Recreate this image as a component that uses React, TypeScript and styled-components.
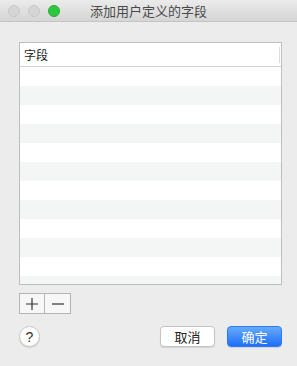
import styled, { createGlobalStyle } from 'styled-components';

const rows = Array.from({ length: 12 }, (_, i) => i);

export default function App() {
  return (
    <>
      <GlobalStyle />
      <Window>
        <TitleBar>
          <Lights>
            <Light />
            <Light />
            <Light $green />
          </Lights>
          <Title>添加用户定义的字段</Title>
        </TitleBar>
        <Content>
          <Table>
            <Header>
              <span>字段</span>
              <HeaderEdge />
            </Header>
            <Body>
              {rows.map((i) => (
                <Row key={i} $odd={i % 2 === 1} />
              ))}
            </Body>
          </Table>
          <Segments>
            <Segment>
              <svg width="14" height="14" viewBox="0 0 14 14">
                <path d="M7 1v12M1 7h12" stroke="#333" strokeWidth="1.2" />
              </svg>
            </Segment>
            <Segment>
              <svg width="14" height="14" viewBox="0 0 14 14">
                <path d="M1 7h12" stroke="#333" strokeWidth="1.2" />
              </svg>
            </Segment>
          </Segments>
          <Footer>
            <Help>?</Help>
            <Actions>
              <Button>取消</Button>
              <Button $primary>确定</Button>
            </Actions>
          </Footer>
        </Content>
      </Window>
    </>
  );
}

const GlobalStyle = createGlobalStyle`
  html, body {
    margin: 0;
    padding: 0;
    background: #ececec;
  }
  body {
    font-family: "Noto Sans CJK SC", "Noto Sans", sans-serif;
  }
`;

const Window = styled.div`
  width: 297px;
  height: 366px;
  background: #ececec;
  display: flex;
  flex-direction: column;
  overflow: hidden;
`;

const TitleBar = styled.div`
  box-sizing: border-box;
  height: 22px;
  border-bottom: 1px solid #c4c4c4;
  background: linear-gradient(#ebebeb, #d5d5d5);
  display: flex;
  align-items: center;
  position: relative;
`;

const Lights = styled.div`
  display: flex;
  gap: 8px;
  padding-left: 8px;
`;

const Light = styled.div<{ $green?: boolean }>`
  box-sizing: border-box;
  width: 12px;
  height: 12px;
  border-radius: 50%;
  background: ${(p) => (p.$green ? '#2dc83f' : '#d6d6d6')};
  border: 1px solid ${(p) => (p.$green ? '#25ad36' : '#c7c7c7')};
`;

const Title = styled.div`
  position: absolute;
  left: 0;
  right: 0;
  top: 0;
  line-height: 21px;
  text-align: center;
  font-size: 13px;
  color: #4a4a4a;
  pointer-events: none;
`;

const Content = styled.div`
  display: flex;
  flex-direction: column;
  padding: 20px 15px 0 19px;
`;

const Table = styled.div`
  box-sizing: border-box;
  width: 263px;
  height: 243px;
  border: 1px solid #bebebe;
  background: #fff;
  display: flex;
  flex-direction: column;
`;

const Header = styled.div`
  box-sizing: border-box;
  height: 24px;
  border-bottom: 1px solid #d2d2d2;
  display: flex;
  align-items: center;
  justify-content: space-between;
  padding-left: 4px;
  font-size: 12px;
  color: #222;
`;

const HeaderEdge = styled.div`
  width: 1px;
  height: 16px;
  background: #dcdcdc;
  margin-right: 1px;
`;

const Body = styled.div`
  flex: 1;
  overflow: hidden;
`;

const Row = styled.div<{ $odd: boolean }>`
  height: 19px;
  background: ${(p) => (p.$odd ? '#f4f5f5' : '#ffffff')};
`;

const Segments = styled.div`
  display: flex;
  margin-top: 8px;
`;

const Segment = styled.div`
  box-sizing: border-box;
  width: 26px;
  height: 21px;
  border: 1px solid #b5b5b5;
  background: #f7f7f7;
  display: flex;
  align-items: center;
  justify-content: center;
  & + & {
    border-left: none;
  }
`;

const Footer = styled.div`
  display: flex;
  align-items: center;
  justify-content: space-between;
  margin-top: 12px;
`;

const Help = styled.div`
  box-sizing: border-box;
  width: 21px;
  height: 21px;
  border-radius: 50%;
  background: #fff;
  border: 1px solid #c8c8c8;
  box-shadow: 0 1px 1px rgba(0, 0, 0, 0.12);
  display: flex;
  align-items: center;
  justify-content: center;
  font-family: "Liberation Sans", sans-serif;
  font-size: 14px;
  color: #333;
`;

const Actions = styled.div`
  display: flex;
  gap: 12px;
`;

const Button = styled.div<{ $primary?: boolean }>`
  box-sizing: border-box;
  width: 55px;
  height: 21px;
  border-radius: 4px;
  display: flex;
  align-items: center;
  justify-content: center;
  font-size: 13px;
  color: ${(p) => (p.$primary ? '#fff' : '#222')};
  background: ${(p) =>
    p.$primary ? 'linear-gradient(#69aafc, #1c6ff9)' : '#ffffff'};
  border: 1px solid ${(p) => (p.$primary ? '#2a79f6' : '#c4c4c4')};
  box-shadow: 0 1px 1px rgba(0, 0, 0, 0.1);
`;
